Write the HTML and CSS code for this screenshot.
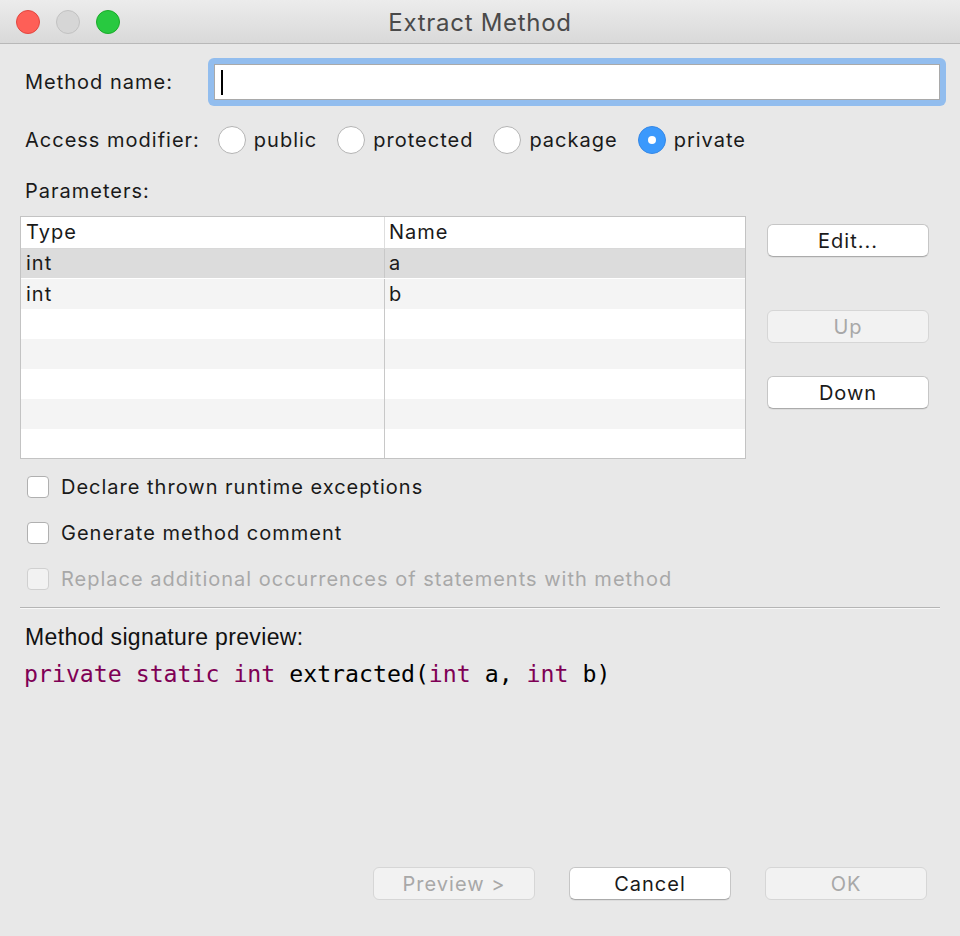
FILE: index.html
```html
<!DOCTYPE html>
<html>
<head>
<meta charset="utf-8">
<link rel="stylesheet" href="styles.css">
</head>
<body>
<div class="window">
  <div class="titlebar">
    <div class="lights">
      <span class="light red"></span>
      <span class="light gray"></span>
      <span class="light green"></span>
    </div>
    <div class="title">Extract Method</div>
  </div>
  <div class="content">
    <div class="row name-row">
      <label class="lbl">Method name:</label>
      <div class="focus-ring"><div class="input"><span class="caret"></span></div></div>
    </div>
    <div class="row access-row">
      <span class="lbl">Access modifier:</span>
      <span class="radio"></span><span class="opt">public</span>
      <span class="radio"></span><span class="opt">protected</span>
      <span class="radio"></span><span class="opt">package</span>
      <span class="radio on"></span><span class="opt">private</span>
    </div>
    <div class="params-label">Parameters:</div>
    <div class="params">
      <div class="table">
        <div class="tr head"><div class="c1">Type</div><div class="c2">Name</div></div>
        <div class="tr sel"><div class="c1">int</div><div class="c2">a</div></div>
        <div class="tr alt"><div class="c1">int</div><div class="c2">b</div></div>
        <div class="tr"><div class="c1"></div><div class="c2"></div></div>
        <div class="tr alt"><div class="c1"></div><div class="c2"></div></div>
        <div class="tr"><div class="c1"></div><div class="c2"></div></div>
        <div class="tr alt"><div class="c1"></div><div class="c2"></div></div>
        <div class="tr last"><div class="c1"></div><div class="c2"></div></div>
      </div>
      <div class="side">
        <button class="btn b-edit">Edit...</button>
        <button class="btn b-up dis">Up</button>
        <button class="btn b-down">Down</button>
      </div>
    </div>
    <div class="checks">
      <div class="check"><span class="box"></span><span>Declare thrown runtime exceptions</span></div>
      <div class="check"><span class="box"></span><span>Generate method comment</span></div>
      <div class="check dis"><span class="box"></span><span>Replace additional occurrences of statements with method</span></div>
    </div>
    <div class="sep"></div>
    <div class="sig-label">Method signature preview:</div>
    <div class="sig"><span class="kw">private static int</span> extracted(<span class="kw">int</span> a, <span class="kw">int</span> b)</div>
    <div class="footer">
      <button class="btn dis">Preview &gt;</button>
      <button class="btn">Cancel</button>
      <button class="btn dis">OK</button>
    </div>
  </div>
</div>
</body>
</html>
```
FILE: styles.css
```css
* { box-sizing: border-box; }
html, body { margin: 0; padding: 0; background: #e8e8e8; }
body { font-family: Inter, "Liberation Sans", Arial, sans-serif; font-size: 20px; letter-spacing: 1px; color: #1a1a1a; }
.window { width: 960px; height: 936px; background: #e8e8e8; border-radius: 0 0 10px 10px; overflow: hidden; }
.titlebar {
  height: 44px; position: relative;
  background: linear-gradient(#ececec, #d9d9d9);
  border-bottom: 1px solid #b8b8b8;
  display: flex; align-items: center; justify-content: center;
}
.lights { position: absolute; left: 16px; top: 10px; display: flex; gap: 16px; }
.light { width: 24px; height: 24px; border-radius: 50%; display: block; }
.red { background: #fe5f57; border: 1px solid #e2463f; }
.gray { background: #d6d6d6; border: 1px solid #c2c2c2; }
.green { background: #28c940; border: 1px solid #1aab29; }
.title { font-size: 24px; letter-spacing: 0.7px; color: #4a4a4a; margin-top: 1px; }
.content { padding: 0 20px 0 20px; }
.row { display: flex; align-items: center; }
.name-row { margin-top: 14px; height: 48px; }
.name-row .lbl { margin-left: 5px; width: 183px; }
.focus-ring { flex: 1; height: 48px; background: #92bdee; border-radius: 6px; padding: 6px; margin-right: -6px; }
.input { height: 36px; background: #fff; border: 1px solid #a9a9a9; position: relative; }
.caret { position: absolute; left: 6px; top: 5px; width: 2px; height: 25px; background: #000; }
.access-row { margin-top: 20px; height: 28px; }
.access-row .lbl { margin-left: 5px; margin-right: 18px; }
.radio { width: 28px; height: 28px; border-radius: 50%; background: #fff; border: 1px solid #b4b4b4; display: inline-block; margin-right: 8px; flex: none; }
.radio.on { background: #3b99fc; border-color: #3688e6; position: relative; }
.radio.on::after { content: ""; position: absolute; left: 9px; top: 9px; width: 8px; height: 8px; border-radius: 50%; background: #fff; }
.opt { margin-right: 20px; }
.params-label { margin: 25px 0 0 5px; height: 24px; line-height: 24px; }
.params { display: flex; margin-top: 13px; }
.table { width: 726px; border: 1px solid #c3c3c3; background: #fff; }
.tr { display: flex; height: 30px; line-height: 30px; }
.tr.head { height: 32px; line-height: 31px; border-bottom: 1px solid #d8d8d8; }
.tr.sel { background: #dcdcdc; height: 29px; line-height: 29px; margin-bottom: 1px; }
.tr.alt { background: #f4f4f4; }
.tr.last { height: 29px; }
.c1 { width: 364px; padding-left: 5px; border-right: 1px solid #c8c8c8; }
.c2 { flex: 1; padding-left: 4px; }
.tr.head .c1 { border-right: 1px solid #dedede; }
.side { display: flex; flex-direction: column; margin-left: 21px; padding-top: 8px; }
.btn {
  font-family: inherit; font-size: 20px; letter-spacing: 1px; color: #1a1a1a;
  width: 162px; height: 33px; padding: 0;
  background: #fff; border: 1px solid #c6c6c6; border-bottom-color: #ababab; border-radius: 6px;
  box-shadow: 0 1px 0 rgba(0,0,0,0.05);
}
.btn.dis { background: #f2f2f2; color: #a8a8a8; border-color: #d6d6d6; box-shadow: none; }
.b-up { margin-top: 53px; }
.b-down { margin-top: 33px; }
.checks { margin-top: 17px; margin-left: 7px; display: flex; flex-direction: column; gap: 24px; }
.check { display: flex; align-items: center; height: 22px; }
.box { width: 22px; height: 22px; border: 1px solid #b0b0b0; border-radius: 4px; background: #fff; margin-right: 12px; flex: none; }
.check.dis { color: #a8a8a8; }
.check.dis .box { background: #f2f2f2; border-color: #d0d0d0; }
.sep { margin-top: 17px; height: 2px; border-top: 1px solid #b5b5b5; border-bottom: 1px solid #f8f8f8; }
.sig-label { margin: 16px 0 0 5px; height: 24px; line-height: 24px; font-family: "Liberation Sans", Arial, sans-serif; font-size: 23px; letter-spacing: 0.35px; color: #111; }
.sig { margin: 11px 0 0 4px; font-family: "DejaVu Sans Mono", monospace; font-size: 23.2px; letter-spacing: 0; color: #000; height: 28px; line-height: 28px; }
.kw { color: #7f0055; }
.footer { display: flex; margin-top: 179px; padding-left: 353px; gap: 34px; }
```
